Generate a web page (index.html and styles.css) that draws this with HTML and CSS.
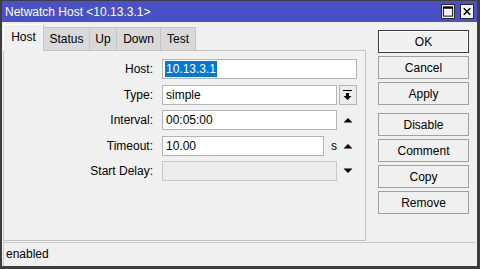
FILE: index.html
```html
<!DOCTYPE html>
<html>
<head>
<meta charset="utf-8">
<link rel="stylesheet" href="styles.css">
</head>
<body>
<div class="window">
  <div class="titlebar">
    <span class="title">Netwatch Host &lt;10.13.3.1&gt;</span>
    <div class="wbtns">
      <div class="wbtn"><svg width="13" height="13" viewBox="0 0 13 13"><rect x="1.5" y="1.5" width="10" height="10" fill="none" stroke="#000" stroke-width="1"/><line x1="1" y1="2.5" x2="12" y2="2.5" stroke="#000" stroke-width="2"/></svg></div>
      <div class="wbtn"><svg width="13" height="13" viewBox="0 0 13 13"><path d="M3 3 L10 10 M10 3 L3 10" stroke="#000" stroke-width="1.6"/></svg></div>
    </div>
  </div>
  <div class="body">
    <div class="left">
      <div class="tabs">
        <div class="tab active t-host">Host</div>
        <div class="tab t-status">Status</div>
        <div class="tab t-up">Up</div>
        <div class="tab t-down">Down</div>
        <div class="tab t-test">Test</div>
      </div>
      <div class="panel">
        <div class="form">
          <label class="lbl">Host:</label>
          <div class="inp wide"><span class="sel">10.13.3.1</span></div>

          <label class="lbl">Type:</label>
          <div class="inp">simple</div>
          <div class="dd"><svg width="12" height="12" viewBox="0 0 12 12"><rect x="1" y="1" width="9" height="1" fill="#000"/><rect x="4" y="4" width="3" height="3" fill="#000"/><path d="M1.5 7 L9.5 7 L5.5 11 Z" fill="#000"/></svg></div>

          <label class="lbl">Interval:</label>
          <div class="inp">00:05:00</div>
          <div class="arrow"><svg width="10" height="6" viewBox="0 0 10 6"><path d="M0.5 5.5 L9.5 5.5 L5 1 Z" fill="#000"/></svg></div>

          <label class="lbl">Timeout:</label>
          <div class="inpunit"><div class="inp short">10.00</div><span class="unit">s</span></div>
          <div class="arrow"><svg width="10" height="6" viewBox="0 0 10 6"><path d="M0.5 5.5 L9.5 5.5 L5 1 Z" fill="#000"/></svg></div>

          <label class="lbl">Start Delay:</label>
          <div class="inp disabled"></div>
          <div class="arrow"><svg width="10" height="6" viewBox="0 0 10 6"><path d="M0.5 0.5 L9.5 0.5 L5 5 Z" fill="#000"/></svg></div>
        </div>
      </div>
    </div>
    <div class="buttons">
      <div class="btn default">OK</div>
      <div class="btn">Cancel</div>
      <div class="btn">Apply</div>
      <div class="btn sep">Disable</div>
      <div class="btn">Comment</div>
      <div class="btn">Copy</div>
      <div class="btn">Remove</div>
    </div>
  </div>
  <div class="status">enabled</div>
</div>
</body>
</html>
```
FILE: styles.css
```css
* { box-sizing: border-box; }
html, body { margin: 0; padding: 0; }
body {
  width: 480px;
  height: 269px;
  overflow: hidden;
  font-family: "Liberation Sans", Arial, sans-serif;
  font-size: 12px;
  color: #000;
}
.window {
  width: 480px;
  height: 269px;
  border-style: solid;
  border-color: #3d3d3d;
  border-width: 1px 3px 3px 2px;
  background: #f0f0f0;
  display: flex;
  flex-direction: column;
}
.titlebar {
  height: 21px;
  background: #4a50c8;
  display: flex;
  align-items: center;
  justify-content: space-between;
  padding: 0 3px 0 3px;
}
.title {
  color: #fff;
  font-size: 12px;
  line-height: 14px;
  padding-top: 1px;
}
.wbtns {
  display: flex;
  gap: 5px;
}
.wbtn {
  width: 14px;
  height: 15px;
  background: #f0f0f0;
  border: 1px solid #2a2a2a;
  display: flex;
  align-items: center;
  justify-content: center;
}
.body {
  flex: 1;
  display: flex;
  padding: 2px 8px 1px 1px;
  gap: 12px;
}
.left {
  width: 363px;
  display: flex;
  flex-direction: column;
}
.tabs {
  display: flex;
  align-items: flex-end;
  height: 26px;
  position: relative;
  z-index: 1;
}
.tab {
  height: 23px;
  background: #d9d9d9;
  border: 1px solid #c4c4c4;
  border-bottom: none;
  border-left: none;
  display: flex;
  align-items: center;
  justify-content: center;
  font-size: 12px;
}
.t-host { width: 41px; }
.t-status { width: 46px; }
.t-up { width: 27px; }
.t-down { width: 44px; }
.t-test { width: 35px; }
.tab.active {
  height: 27px;
  margin-bottom: -1px;
  background: #f0f0f0;
  border-left: 1px solid #ffffff;
  border-color: #ffffff #c4c4c4 #f0f0f0 #ffffff;
  padding-bottom: 2px;
}
.panel {
  flex: 1;
  border: 1px solid #c4c4c4;
  padding-top: 8px;
}
.form {
  display: grid;
  grid-template-columns: 154px 179px 22px;
  grid-auto-rows: 20px;
  row-gap: 5.5px;
  align-items: center;
}
.lbl {
  text-align: right;
  padding-right: 5px;
  line-height: 20px;
}
.inp {
  height: 20px;
  margin-left: 4px;
  width: 175px;
  background: #fff;
  border: 1px solid #b4b4b4;
  padding: 0 3px;
  line-height: 18px;
  white-space: nowrap;
}
.inp.wide {
  grid-column: 2 / 4;
  width: 195px;
}
.inp.disabled {
  background: #ececec;
  border-color: #c8c8c8;
}
.sel {
  background: #0078d7;
  color: #fff;
  display: inline-block;
  line-height: 16px;
  padding: 0 1px;
  margin-left: -1px;
}
.inpunit {
  display: flex;
  align-items: center;
}
.inp.short {
  width: 164px;
}
.unit {
  margin-left: 7px;
}
.dd {
  width: 18px;
  height: 20px;
  margin-left: 2px;
  border: 1px solid #b4b4b4;
  background: #ececec;
  display: flex;
  align-items: center;
  justify-content: center;
}
.arrow {
  display: flex;
  align-items: center;
  justify-content: center;
}
.buttons {
  width: 91px;
  display: flex;
  flex-direction: column;
  gap: 3px;
  padding-top: 6px;
}
.btn {
  height: 23px;
  border: 1px solid #a0a0a0;
  background: #f0f0f0;
  display: flex;
  align-items: center;
  justify-content: center;
  font-size: 12px;
}
.btn.default {
  border: 1px solid #3c3c3c;
  box-shadow: inset 0 0 0 1px #ffffff;
}
.btn.sep {
  margin-top: 5px;
}
.status {
  height: 24px;
  margin: 0 2px 0 1px;
  border-top: 1px solid #c8c8c8;
  border-left: 1px solid #c8c8c8;
  padding-left: 2px;
  line-height: 22px;
  font-size: 12px;
}
```
